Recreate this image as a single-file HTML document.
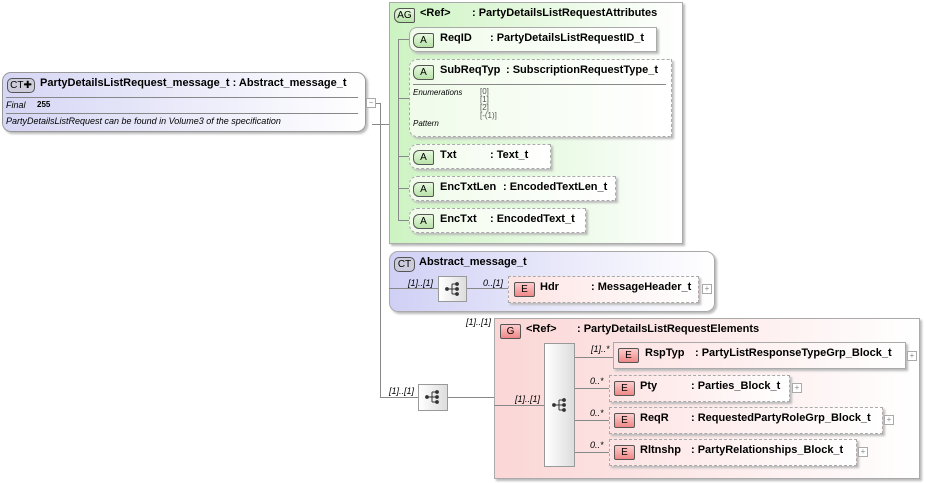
<!DOCTYPE html><html><head><meta charset="utf-8"><style>
body{margin:0;width:926px;height:483px;background:#fff;position:relative;overflow:hidden;font-family:"Liberation Sans",Arial,sans-serif;font-size:11px;color:#000}
.a{position:absolute}
.b{font-weight:bold}
.i{font-style:italic;font-size:9px}
.l{position:absolute;background:#888}
.tag{position:absolute;height:13px;border:1px solid #555;font-size:10px;line-height:13px;text-align:center;border-radius:2px}
.at{background:linear-gradient(#e8f8e0,#b7e3a8);border-radius:6px 2px 2px 6px}
.el{background:linear-gradient(#fcc,#e88)}
.box{position:absolute;box-sizing:border-box;box-shadow:2px 2px 2px #bbb}
.sol{border:1px solid #aaa;background:#fff}
.das{border:1px dashed #aaa;background:#fff}
.pk{background:linear-gradient(90deg,#fde3e3,#fff)}
.gr{background:linear-gradient(90deg,#f0fbea,#fff)}
.seq{position:absolute;box-sizing:border-box;border:1px solid #999;background:linear-gradient(90deg,#fff,#ddd)}
.plus{position:absolute;width:8px;height:8px;border:1px solid #aaa;background:#fff;font-size:8px;line-height:8px;text-align:center;color:#888}
</style></head><body>
<svg width="0" height="0" style="position:absolute"><defs><g id="s"><circle cx="2" cy="7" r="1.9" fill="#333"/><line x1="2" y1="7" x2="7" y2="7" stroke="#333"/><path d="M7 2V12M7 2H12M7 7H12M7 12H12" stroke="#333" fill="none"/><circle cx="12" cy="2" r="1.9" fill="#333"/><circle cx="12" cy="7" r="1.9" fill="#333"/><circle cx="12" cy="12" r="1.9" fill="#333"/></g></defs></svg>

<div class="box" style="left:2px;top:72px;width:364px;height:60px;border:1px solid #999;border-radius:9px;background:linear-gradient(90deg,#d6d6f5,#fff)"></div>
<div class="tag" style="left:7px;top:78px;width:26px;background:#ccd;border-radius:5px">CT✚</div>
<div class="a b" style="left:40px;top:77px">PartyDetailsListRequest_message_t : Abstract_message_t</div>
<div class="l" style="left:6px;top:97px;width:352px;height:1px"></div>
<div class="a i" style="left:6px;top:100px">Final</div><div class="a b" style="left:37px;top:100px;font-size:8px">255</div>
<div class="l" style="left:6px;top:113px;width:352px;height:1px"></div>
<div class="a i" style="left:6px;top:116px">PartyDetailsListRequest can be found in Volume3 of the specification</div>
<div class="plus" style="left:366px;top:98px">−</div>
<div class="l" style="left:376px;top:103px;width:4px;height:1px"></div>
<div class="l" style="left:380px;top:103px;width:1px;height:295px"></div>
<div class="l" style="left:372px;top:124px;width:17px;height:1px"></div>

<div class="box" style="left:389px;top:2px;width:294px;height:242px;border:1px solid #aaa;background:linear-gradient(90deg,#cdf3c2,#fff)"></div>
<div class="tag at" style="left:394px;top:8px;width:19px">AG</div>
<div class="a b" style="left:420px;top:7px">&lt;Ref&gt;</div><div class="a b" style="left:472px;top:7px">: PartyDetailsListRequestAttributes</div>
<div class="l" style="left:398px;top:39px;width:1px;height:182px"></div>
<div class="l" style="left:398px;top:39px;width:11px;height:1px"></div>
<div class="l" style="left:398px;top:98px;width:11px;height:1px"></div>
<div class="l" style="left:398px;top:156px;width:11px;height:1px"></div>
<div class="l" style="left:398px;top:188px;width:11px;height:1px"></div>
<div class="l" style="left:398px;top:220px;width:11px;height:1px"></div>

<div class="box sol gr" style="left:409px;top:27px;width:248px;height:25px;border-radius:8px 0 0 8px"></div>
<div class="tag at" style="left:413px;top:33px;width:19px">A</div><div class="a b" style="left:440px;top:32px">ReqID</div><div class="a b" style="left:490px;top:32px">: PartyDetailsListRequestID_t</div>

<div class="box das gr" style="left:409px;top:59px;width:263px;height:78px;border-radius:8px 0 0 8px"></div>
<div class="tag at" style="left:413px;top:65px;width:19px">A</div><div class="a b" style="left:440px;top:64px">SubReqTyp</div><div class="a b" style="left:506px;top:64px">: SubscriptionRequestType_t</div>
<div class="l" style="left:413px;top:84px;width:253px;height:1px"></div>
<div class="a i" style="left:413px;top:88px;font-size:8px">Enumerations</div>
<div class="a" style="left:480px;top:88px;font-size:8px;line-height:8px;color:#555">[0]<br>[1]<br>[2]<br>[-(1)]</div>
<div class="a i" style="left:413px;top:119px;font-size:8px">Pattern</div>

<div class="box das gr" style="left:409px;top:144px;width:142px;height:25px;border-radius:8px 0 0 8px"></div>
<div class="tag at" style="left:413px;top:150px;width:19px">A</div><div class="a b" style="left:440px;top:149px">Txt</div><div class="a b" style="left:490px;top:149px">: Text_t</div>
<div class="box das gr" style="left:409px;top:176px;width:207px;height:25px;border-radius:8px 0 0 8px"></div>
<div class="tag at" style="left:413px;top:182px;width:19px">A</div><div class="a b" style="left:440px;top:181px">EncTxtLen</div><div class="a b" style="left:503px;top:181px">: EncodedTextLen_t</div>
<div class="box das gr" style="left:409px;top:208px;width:177px;height:25px;border-radius:8px 0 0 8px"></div>
<div class="tag at" style="left:413px;top:214px;width:19px">A</div><div class="a b" style="left:440px;top:213px">EncTxt</div><div class="a b" style="left:490px;top:213px">: EncodedText_t</div>

<div class="box" style="left:389px;top:251px;width:326px;height:61px;border:1px solid #aaa;border-radius:9px;background:linear-gradient(90deg,#d0d0f5,#fff)"></div>
<div class="tag" style="left:394px;top:257px;width:19px;background:#ccd;border-radius:5px">CT</div>
<div class="a b" style="left:419px;top:256px">Abstract_message_t</div>
<div class="l" style="left:389px;top:288px;width:49px;height:1px"></div>
<div class="a i" style="left:408px;top:278px">[1]..[1]</div>
<div class="seq" style="left:438px;top:276px;width:29px;height:26px"></div><svg class="a" style="left:445px;top:282px" width="15" height="15"><use href="#s"/></svg>
<div class="l" style="left:467px;top:288px;width:41px;height:1px"></div>
<div class="a i" style="left:483px;top:278px">0..[1]</div>
<div class="box das pk" style="left:508px;top:276px;width:191px;height:27px"></div>
<div class="tag el" style="left:514px;top:282px;width:19px">E</div><div class="a b" style="left:540px;top:281px">Hdr</div><div class="a b" style="left:591px;top:281px">: MessageHeader_t</div>
<div class="plus" style="left:702px;top:284px">+</div>

<div class="l" style="left:380px;top:397px;width:38px;height:1px"></div>
<div class="a i" style="left:389px;top:386px">[1]..[1]</div>
<div class="seq" style="left:418px;top:384px;width:30px;height:27px"></div><svg class="a" style="left:425px;top:390px" width="15" height="15"><use href="#s"/></svg>
<div class="l" style="left:448px;top:397px;width:47px;height:1px"></div>
<div class="a i" style="left:466px;top:317px">[1]..[1]</div>
<div class="box" style="left:494px;top:318px;width:426px;height:161px;border:1px solid #aaa;background:linear-gradient(90deg,#fbd6d6,#fff)"></div>
<div class="tag el" style="left:500px;top:324px;width:19px">G</div>
<div class="a b" style="left:526px;top:323px">&lt;Ref&gt;</div><div class="a b" style="left:577px;top:323px">: PartyDetailsListRequestElements</div>
<div class="l" style="left:494px;top:405px;width:50px;height:1px"></div>
<div class="a i" style="left:515px;top:394px">[1]..[1]</div>
<div class="seq" style="left:544px;top:343px;width:31px;height:124px"></div><svg class="a" style="left:552px;top:398px" width="15" height="15"><use href="#s"/></svg>
<div class="l" style="left:575px;top:357px;width:38px;height:1px"></div>
<div class="l" style="left:575px;top:388px;width:34px;height:1px"></div>
<div class="l" style="left:575px;top:420px;width:34px;height:1px"></div>
<div class="l" style="left:575px;top:452px;width:34px;height:1px"></div>
<div class="a i" style="left:591px;top:344px">[1]..*</div>
<div class="a i" style="left:590px;top:376px">0..*</div>
<div class="a i" style="left:590px;top:408px">0..*</div>
<div class="a i" style="left:590px;top:440px">0..*</div>

<div class="box sol pk" style="left:613px;top:342px;width:293px;height:27px"></div>
<div class="tag el" style="left:618px;top:348px;width:19px">E</div><div class="a b" style="left:645px;top:347px">RspTyp</div><div class="a b" style="left:695px;top:347px">: PartyListResponseTypeGrp_Block_t</div>
<div class="plus" style="left:907px;top:351px">+</div>
<div class="box das pk" style="left:609px;top:375px;width:181px;height:27px"></div>
<div class="tag el" style="left:614px;top:381px;width:19px">E</div><div class="a b" style="left:640px;top:380px">Pty</div><div class="a b" style="left:691px;top:380px">: Parties_Block_t</div>
<div class="plus" style="left:792px;top:383px">+</div>
<div class="box das pk" style="left:609px;top:407px;width:274px;height:27px"></div>
<div class="tag el" style="left:614px;top:413px;width:19px">E</div><div class="a b" style="left:640px;top:412px">ReqR</div><div class="a b" style="left:691px;top:412px">: RequestedPartyRoleGrp_Block_t</div>
<div class="plus" style="left:884px;top:415px">+</div>
<div class="box das pk" style="left:609px;top:439px;width:248px;height:27px"></div>
<div class="tag el" style="left:614px;top:445px;width:19px">E</div><div class="a b" style="left:640px;top:444px">Rltnshp</div><div class="a b" style="left:691px;top:444px">: PartyRelationships_Block_t</div>
<div class="plus" style="left:858px;top:447px">+</div>
</body></html>
